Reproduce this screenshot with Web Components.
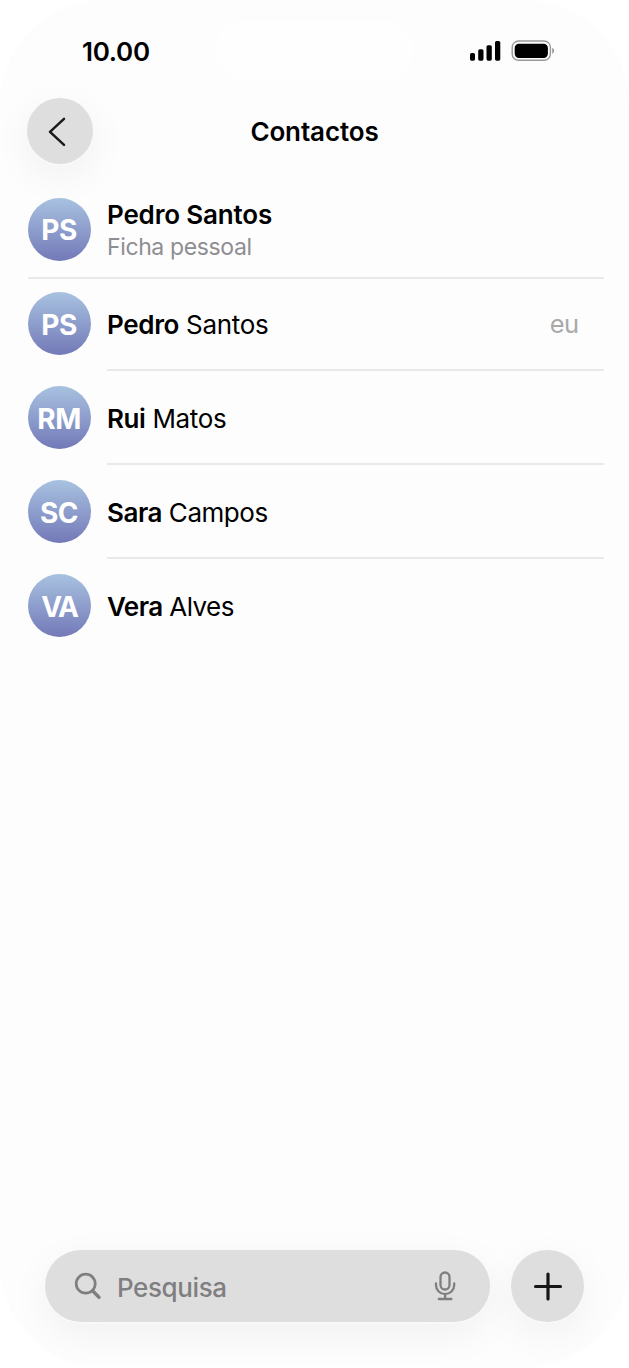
<!DOCTYPE html>
<html lang="pt"><head><meta charset="utf-8"><title>Contactos</title>
<style>
html,body{margin:0;background:#fff}
body{font-family:Inter,"Liberation Sans",sans-serif;color:#000}
</style></head><body>
<phone-screen>
  <status-bar slot="status" time="10.00"></status-bar>
  <nav-header slot="header">Contactos</nav-header>
  <contact-row class="card" initials="PS" style="--ls:-.17px"><b>Pedro Santos</b><span slot="sub">Ficha pessoal</span></contact-row>
  <contact-row class="me" initials="PS"><b>Pedro</b> Santos<span slot="end">eu</span></contact-row>
  <contact-row initials="RM" style="--ls:-.38px"><b>Rui</b> Matos</contact-row>
  <contact-row initials="SC" style="--ls:-.46px"><b>Sara</b> Campos</contact-row>
  <contact-row class="last" initials="VA" style="--ls:-.56px;--av:-2px"><b>Vera</b> Alves</contact-row>
  <search-dock slot="dock">Pesquisa</search-dock>
</phone-screen>
<script>
const define=(name,html)=>customElements.define(name,class extends HTMLElement{
  constructor(){super();const t=document.createElement('template');t.innerHTML=html;
    this.attachShadow({mode:'open'}).append(t.content.cloneNode(true));}
  connectedCallback(){this.shadowRoot.querySelectorAll('[data-attr]').forEach(e=>e.textContent=this.getAttribute(e.dataset.attr));}
});
define('phone-screen',`<style>
:host{display:flex;flex-direction:column;box-sizing:border-box;width:629px;height:1368px;background:#fdfdfd;border-radius:104px;overflow:hidden}
main{flex:1;padding-top:5px}</style>
<slot name="status"></slot><slot name="header"></slot><main><slot></slot></main><slot name="dock"></slot>`);
define('status-bar',`<style>
:host{display:grid;grid-template-columns:216px 197px 216px;height:98px;align-items:start}
time{padding:36px 0 0 82px;font-weight:600;font-size:26px;line-height:31px;letter-spacing:-.3px}
.island{height:59px;margin-top:21px;border-radius:30px;background:#fefefe}
svg{display:block;margin:39px 0 0 56px}</style>
<time data-attr="time"></time><div class="island"></div>
<svg width="86" height="24" viewBox="469 39 86 24">
<rect x="470" y="53" width="5" height="7.7" rx="1.6"/><rect x="478.200" y="49.300" width="5.300" height="11.400" rx="1.600"/><rect x="486.500" y="45.200" width="5.300" height="15.500" rx="1.600"/><rect x="495" y="41" width="5.300" height="19.700" rx="1.600"/>
<rect x="512.200" y="41" width="38.200" height="19.300" rx="6.400" fill="none" stroke="#999" stroke-width="1.400"/><rect x="514.700" y="43.700" width="33.200" height="14.200" rx="4.200"/><path d="M552.200 47.800q2 .8 2 3t-2 3z" fill="#999"/></svg>`);
define('glass-disc',`<style>
:host{display:grid;place-items:center;box-sizing:border-box;width:var(--size);height:var(--size);border-radius:50%;background:#dedede;box-shadow:0 .5px 0 1px #f9f9f9,0 12px 40px rgba(0,0,0,.055)}
</style><slot></slot>`);
define('nav-header',`<style>
:host{display:grid;grid-template-columns:88px 1fr 88px;align-items:center;height:67px;padding:0 6px}
glass-disc{--size:66px;margin:-1px 0 0 20.600px}
h1{margin:0;text-align:center;font-size:26px;font-weight:600;line-height:32px;letter-spacing:-.12px}
svg{display:block}</style>
<glass-disc><svg width="66" height="66" viewBox="27.300 98 66 66"><path d="M64.300 118.800 50.300 131.800 64.300 144.800" fill="none" stroke="#1a1a1a" stroke-width="2.500" stroke-linecap="round" stroke-linejoin="round"/></svg></glass-disc>
<h1><slot></slot></h1>`);
define('contact-row',`<style>
:host{display:flex;height:94px;margin:0 25px 0 28px;gap:16px;font-size:26px;line-height:32px}
:host(.me){height:92px}:host(.me) .avatar{margin-top:13.200px}:host(.me) .body{padding-top:2px}
:host(.card){height:109px;box-sizing:border-box;border-bottom:2px solid #e9e9e9}
.avatar{flex:none;width:63px;height:63px;margin-top:15.200px;border-radius:50%;background:linear-gradient(#a8c2e0,#7379b8);color:#fff;display:grid;place-items:center;font-weight:700;font-size:28px;letter-spacing:var(--av,-.5px);box-sizing:border-box;padding:2px 1px 0 0}
.body{flex:1;display:flex;align-items:center;box-sizing:border-box;padding-top:4px;border-bottom:2px solid #e9e9e9;letter-spacing:var(--ls,-.33px)}
:host(.last) .body,:host(.card) .body{border-color:transparent}
::slotted(b){font-weight:600}
.name{flex:1;white-space:pre}
.end{color:#a9a9a9;padding:0 25.500px 2px 0;font-size:25.500px;letter-spacing:-.6px}
.sub{color:#8e8e92;font-size:23px;letter-spacing:-.38px}
:host(.card) .avatar{margin-top:28px;padding-top:1px}
:host(.card) .body{flex-direction:column;align-items:flex-start;padding-top:29px}
:host(.card) .name{flex:none}:host(.card) .end{display:none}</style>
<div class="avatar" data-attr="initials"></div>
<div class="body"><div class="name"><slot></slot></div><div class="sub"><slot name="sub"></slot></div><div class="end"><slot name="end"></slot></div></div>`);
define('search-dock',`<style>
:host{display:flex;gap:21.300px;padding:0 45px 45.600px}
.field{display:flex;align-items:center;box-sizing:border-box;width:445px;height:72px;border-radius:36px;background:#dedede;box-shadow:0 .5px 0 1px #f9f9f9,0 12px 40px rgba(0,0,0,.055);color:#7f7f81;font-size:26px;padding:1px 33px 0 29px}
.label{flex:1;padding:2px 0 0 14px;letter-spacing:-.4px;font-weight:450}
svg{display:block}glass-disc{--size:72.500px}</style>
<div class="field"><svg width="29" height="29" viewBox="74 1272 29 29" fill="none" stroke="#7f7f81" stroke-width="2.700" stroke-linecap="round"><circle cx="85.700" cy="1283.700" r="9.500"/><path d="M92.800 1291 99 1297.200" stroke-width="3.400"/></svg>
<span class="label"><slot></slot></span>
<svg width="24" height="32" viewBox="433 1270.500 24 32" fill="none" stroke="#7f7f81" stroke-width="2.300" stroke-linecap="round"><rect x="440.500" y="1273" width="9" height="17" rx="4.500"/><path d="M436 1284v1.800a9.100 8.800 0 0 0 18.200 0v-1.800M445.100 1294.800v4.700M438.800 1299.500h12.600"/></svg></div>
<glass-disc><svg width="32" height="32" viewBox="0 -.500 32 32"><path d="M16 3.500v25M3.500 16h25" stroke="#161616" stroke-width="3.200" stroke-linecap="round"/></svg></glass-disc>`);
</script></body></html>
